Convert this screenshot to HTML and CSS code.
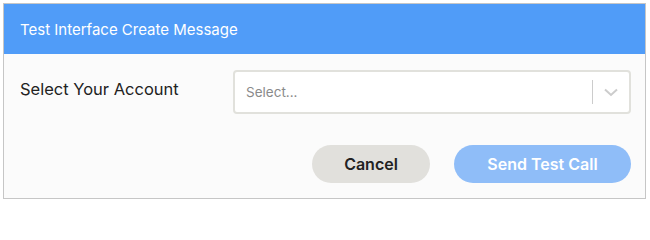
FILE: index.html
```html
<!DOCTYPE html>
<html>
<head>
<meta charset="utf-8">
<link rel="stylesheet" href="styles.css">
</head>
<body>
<div class="modal">
  <div class="modal-header">Test Interface Create Message</div>
  <div class="modal-body">
    <div class="field-row">
      <label class="field-label">Select Your Account</label>
      <div class="select">
        <span class="placeholder">Select...</span>
        <span class="indicators">
          <span class="sep"></span>
          <svg class="chevron" width="20" height="20" viewBox="0 0 20 20"><path d="M4 7.5 L10 13 L16 7.5" fill="none" stroke="#cccccc" stroke-width="2"/></svg>
        </span>
      </div>
    </div>
    <div class="actions">
      <button class="btn btn-cancel">Cancel</button>
      <button class="btn btn-send">Send Test Call</button>
    </div>
  </div>
</div>
</body>
</html>
```
FILE: styles.css
```css
html, body { margin: 0; padding: 0; background: #ffffff; }
body { padding: 3px; font-family: Inter, "Open Sans", sans-serif; }
.modal {
  width: 641px;
  border: 1px solid #c6c6c6;
  background: #fbfbfb;
}
.modal-header {
  background: #509cf8;
  color: #ffffff;
  height: 50px;
  box-sizing: border-box;
  padding: 1px 16px 0;
  display: flex;
  align-items: center;
  font-size: 15px;
}
.modal-body { padding: 16px 14px 15px 16px; }
.field-row { display: flex; align-items: center; }
.field-label {
  width: 213px;
  font-size: 16.5px;
  color: #222222;
  padding-bottom: 6px;
}
.select {
  flex: 1;
  height: 44px;
  box-sizing: border-box;
  border: 2px solid #e1e1dc;
  border-radius: 4px;
  background: #ffffff;
  display: flex;
  align-items: center;
  padding-left: 11px;
}
.placeholder { flex: 1; color: #8a8a8a; font-size: 13.5px; }
.indicators { display: flex; align-items: center; height: 100%; }
.sep { width: 1px; height: 24px; background: #cccccc; }
.chevron { margin: 0 8px 0 8px; }
.actions {
  display: flex;
  justify-content: flex-end;
  gap: 24px;
  margin-top: 31px;
}
.btn {
  height: 38px;
  border: none;
  border-radius: 19px;
  font-family: inherit;
  font-size: 16px;
  font-weight: 600;
}
.btn-cancel { width: 118px; background: #e1e0dc; color: #222222; }
.btn-send { width: 177px; background: #8fbdf8; color: #ffffff; }
```
